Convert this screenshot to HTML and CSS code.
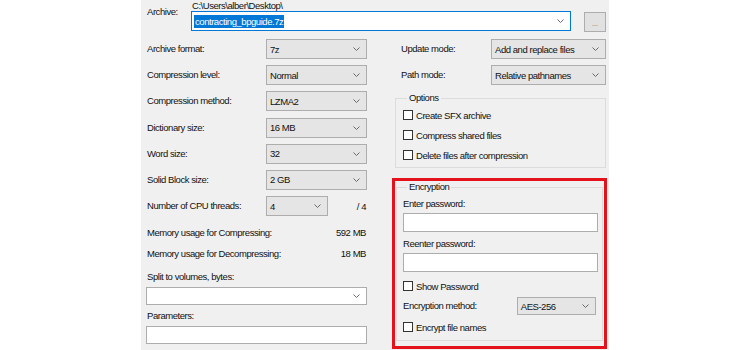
FILE: index.html
```html
<!DOCTYPE html>
<html>
<head>
<meta charset="utf-8">
<link rel="stylesheet" href="styles.css">
</head>
<body>
<div class="dialog">
  <div class="archive-row">
    <div class="archive-label">Archive:</div>
    <div class="archive-main">
      <div class="path">C:\Users\alber\Desktop\</div>
      <div class="combo focus"><span class="sel">contracting_bpguide.7z</span><svg class="chev" width="7" height="4" viewBox="0 0 7 4"><path d="M0.5 0.5L3.5 3.5L6.5 0.5" fill="none" stroke="#6a6a6a" stroke-width="1"/></svg></div>
    </div>
    <div class="btn">...</div>
  </div>

  <div class="cols">
    <div class="left">
      <div class="form-grid">
        <div class="lbl">Archive format:</div>
        <div class="select"><span>7z</span><svg class="chev" width="7" height="4" viewBox="0 0 7 4"><path d="M0.5 0.5L3.5 3.5L6.5 0.5" fill="none" stroke="#6a6a6a"/></svg></div>
        <div class="lbl">Compression level:</div>
        <div class="select"><span>Normal</span><svg class="chev" width="7" height="4" viewBox="0 0 7 4"><path d="M0.5 0.5L3.5 3.5L6.5 0.5" fill="none" stroke="#6a6a6a"/></svg></div>
        <div class="lbl">Compression method:</div>
        <div class="select"><span>LZMA2</span><svg class="chev" width="7" height="4" viewBox="0 0 7 4"><path d="M0.5 0.5L3.5 3.5L6.5 0.5" fill="none" stroke="#6a6a6a"/></svg></div>
        <div class="lbl">Dictionary size:</div>
        <div class="select"><span>16 MB</span><svg class="chev" width="7" height="4" viewBox="0 0 7 4"><path d="M0.5 0.5L3.5 3.5L6.5 0.5" fill="none" stroke="#6a6a6a"/></svg></div>
        <div class="lbl">Word size:</div>
        <div class="select"><span>32</span><svg class="chev" width="7" height="4" viewBox="0 0 7 4"><path d="M0.5 0.5L3.5 3.5L6.5 0.5" fill="none" stroke="#6a6a6a"/></svg></div>
        <div class="lbl">Solid Block size:</div>
        <div class="select"><span>2 GB</span><svg class="chev" width="7" height="4" viewBox="0 0 7 4"><path d="M0.5 0.5L3.5 3.5L6.5 0.5" fill="none" stroke="#6a6a6a"/></svg></div>
        <div class="lbl">Number of CPU threads:</div>
        <div class="cpu-cell">
          <div class="select cpu"><span>4</span><svg class="chev" width="7" height="4" viewBox="0 0 7 4"><path d="M0.5 0.5L3.5 3.5L6.5 0.5" fill="none" stroke="#6a6a6a"/></svg></div>
          <span class="of">/ 4</span>
        </div>
      </div>
      <div class="mem first"><span>Memory usage for Compressing:</span><span>592 MB</span></div>
      <div class="mem second"><span>Memory usage for Decompressing:</span><span>18 MB</span></div>
      <div class="lbl split-lbl">Split to volumes, bytes:</div>
      <div class="combo white wide"><span></span><svg class="chev" width="7" height="4" viewBox="0 0 7 4"><path d="M0.5 0.5L3.5 3.5L6.5 0.5" fill="none" stroke="#6a6a6a"/></svg></div>
      <div class="lbl param-lbl">Parameters:</div>
      <div class="textbox param"></div>
    </div>

    <div class="right">
      <div class="mode-grid">
        <div class="lbl">Update mode:</div>
        <div class="select"><span>Add and replace files</span><svg class="chev" width="7" height="4" viewBox="0 0 7 4"><path d="M0.5 0.5L3.5 3.5L6.5 0.5" fill="none" stroke="#6a6a6a"/></svg></div>
        <div class="lbl">Path mode:</div>
        <div class="select"><span>Relative pathnames</span><svg class="chev" width="7" height="4" viewBox="0 0 7 4"><path d="M0.5 0.5L3.5 3.5L6.5 0.5" fill="none" stroke="#6a6a6a"/></svg></div>
      </div>

      <fieldset class="group options">
        <legend>Options</legend>
        <div class="check-row"><span class="box"></span><span>Create SFX archive</span></div>
        <div class="check-row"><span class="box"></span><span>Compress shared files</span></div>
        <div class="check-row"><span class="box"></span><span>Delete files after compression</span></div>
      </fieldset>

      <div class="highlight">
        <fieldset class="group encryption">
          <legend>Encryption</legend>
          <div class="lbl enc-lbl first">Enter password:</div>
          <div class="textbox pw"></div>
          <div class="lbl enc-lbl">Reenter password:</div>
          <div class="textbox pw"></div>
          <div class="check-row small show"><span class="box"></span><span>Show Password</span></div>
          <div class="method-row">
            <div class="lbl">Encryption method:</div>
            <div class="select method"><span>AES-256</span><svg class="chev" width="7" height="4" viewBox="0 0 7 4"><path d="M0.5 0.5L3.5 3.5L6.5 0.5" fill="none" stroke="#6a6a6a"/></svg></div>
          </div>
          <div class="check-row small names"><span class="box"></span><span>Encrypt file names</span></div>
        </fieldset>
      </div>
    </div>
  </div>
</div>
</body>
</html>
```

FILE: styles.css
```css
* { box-sizing: border-box; }
html, body { margin: 0; padding: 0; background: #ffffff; }
body {
  font-family: "Liberation Sans", Arial, sans-serif;
  font-size: 9.5px;
  letter-spacing: -0.45px;
  color: #111111;
}
.dialog {
  margin-left: 141px;
  width: 468px;
  height: 350px;
  background: #f0f0f0;
  overflow: hidden;
}
.archive-row { display: flex; }
.archive-label { width: 50px; padding: 5px 0 0 6px; line-height: 14px; }
.archive-main { width: 380px; }
.path { height: 11px; line-height: 11px; padding-left: 1px; }
.combo {
  height: 20px;
  display: flex;
  align-items: center;
  justify-content: space-between;
  border: 1px solid #adadad;
  padding: 0 6px 0 2px;
  background: #fff;
}
.combo.focus { border-color: #0078d7; }
.sel { background: #0078d7; color: #fff; line-height: 13px; padding: 0 1px; }
.btn {
  margin: 12px 0 0 13px;
  width: 22px;
  height: 20px;
  border: 1px solid #adadad;
  background: #e1e1e1;
  text-align: center;
  line-height: 22px;
  font-size: 7px;
  color: #666;
  letter-spacing: 0;
}
.cols {
  display: grid;
  grid-template-columns: 250px 218px;
  margin-top: 7px;
}
.left { padding-left: 5px; width: 227px; }
.lbl { line-height: 14px; padding-left: 1px; white-space: nowrap; }
.form-grid {
  display: grid;
  grid-template-columns: 120px 101px;
  grid-auto-rows: 20px;
  row-gap: 6.2px;
  align-items: center;
}
.select {
  height: 20px;
  display: flex;
  align-items: center;
  justify-content: space-between;
  border: 1px solid #adadad;
  background: #e5e5e5;
  padding: 0 6px 0 3px;
  white-space: nowrap;
}
.chev { flex: none; }
.cpu-cell { display: flex; align-items: center; justify-content: space-between; }
.select.cpu { width: 62px; }
.of { padding-right: 1px; }
.mem {
  width: 221px;
  display: flex;
  justify-content: space-between;
  line-height: 14px;
  padding: 0 1px;
}
.mem.first { margin-top: 10px; }
.mem.second { margin-top: 7px; }
.split-lbl { margin-top: 9px; }
.combo.wide { width: 221px; height: 18px; margin-top: 3px; }
.param-lbl { margin-top: 4px; }
.textbox { background: #fff; border: 1px solid #adadad; }
.textbox.param { width: 221px; height: 18px; margin-top: 3px; }

.mode-grid {
  display: grid;
  grid-template-columns: 91px 115px;
  grid-auto-rows: 20px;
  row-gap: 6px;
  align-items: center;
  padding-left: 9px;
}
.group {
  margin: 0;
  border: 1px solid #dcdcdc;
  min-width: 0;
}
.group legend {
  padding: 0 2px;
  margin-left: 4px;
  line-height: 12px;
}
.options {
  margin: 7px 3px 0 4px;
  padding: 1px 0 2px 7px;
}
.check-row {
  display: flex;
  align-items: center;
  height: 20px;
  gap: 3px;
}
.box {
  width: 10px;
  height: 10px;
  border: 1px solid #333;
  background: #fff;
  flex: none;
}
.highlight {
  margin: 10px 0 0 1px;
  width: 215px;
  height: 171px;
  border: 3px solid #e4121a;
  padding: 0 1px;
}
.encryption {
  padding: 4px 6px 6px 6px;
}
.enc-lbl { padding-left: 0; }
.enc-lbl + .textbox { margin-top: 2px; }
.textbox.pw + .enc-lbl { margin-top: 5px; }
.textbox.pw { width: 195px; height: 19px; }
.check-row.small { height: 14px; }
.check-row.show { margin-top: 7px; }
.method-row {
  display: flex;
  align-items: center;
  margin-top: 4px;
}
.method-row .lbl { width: 115px; padding-left: 0; }
.select.method { width: 80px; height: 18px; }
.check-row.names { margin-top: 5px; }
```
